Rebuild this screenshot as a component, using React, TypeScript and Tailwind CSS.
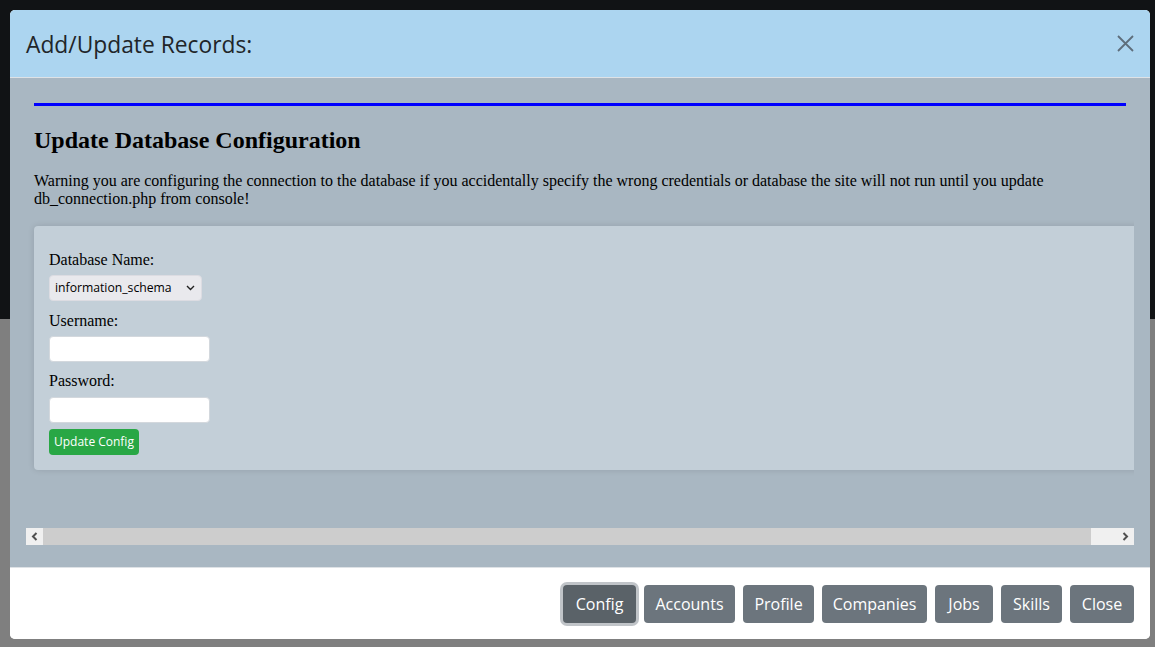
import React from "react";

const sans = { fontFamily: '"Open Sans", "Noto Sans", sans-serif' };

function Chevron({ dir }: { dir: "left" | "right" }) {
  return (
    <svg width="7" height="9" viewBox="0 0 7 9" className="block">
      {dir === "left" ? (
        <polyline points="5.5,1 2,4.5 5.5,8" fill="none" stroke="#505050" strokeWidth="2" />
      ) : (
        <polyline points="1.5,1 5,4.5 1.5,8" fill="none" stroke="#505050" strokeWidth="2" />
      )}
    </svg>
  );
}

export default function App() {
  const buttons: { label: string; w: string; active?: boolean }[] = [
    { label: "Config", w: "w-[73px]", active: true },
    { label: "Accounts", w: "w-[91px]" },
    { label: "Profile", w: "w-[71px]" },
    { label: "Companies", w: "w-[105px]" },
    { label: "Jobs", w: "w-[58px]" },
    { label: "Skills", w: "w-[61px]" },
    { label: "Close", w: "w-[64px]" },
  ];

  return (
    <div className="relative w-[1155px] h-[647px] overflow-hidden">
      <div className="h-[319px] bg-[#111315]" />
      <div className="h-[328px] bg-[#7f7f7f]" />

      <div className="absolute left-[10px] top-[10px] w-[1140px] h-[629px] flex flex-col rounded-[5px] overflow-hidden bg-white">
        {/* header */}
        <div className="h-[68px] shrink-0 bg-[#acd5f0] border-b border-[#dee2e6] flex items-center justify-between pl-4 pr-4">
          <div className="pt-[3px] text-[22.8px] leading-[36px] text-[#212529]" style={sans}>
            Add/Update Records:
          </div>
          <svg width="17" height="17" viewBox="0 0 17 17" className="block">
            <path d="M1 1 L16 16 M16 1 L1 16" stroke="#5e6e7b" strokeWidth="1.8" fill="none" />
          </svg>
        </div>

        {/* body */}
        <div className="h-[489px] shrink-0 bg-[#a9b7c2] pt-4 px-4 pb-[22px] flex flex-col">
          <div className="h-[434px] shrink-0 overflow-hidden px-2 pt-[9px]" style={{ fontFamily: '"Liberation Serif", "Times New Roman", serif' }}>
            <div className="h-[3px] bg-[#0000ff]" />
            <h3 className="mt-[20px] text-[24px] leading-[28px] font-bold text-black">
              Update Database Configuration
            </h3>
            <p className="mt-[18px] text-[16px] leading-[18.4px] text-black">
              Warning you are configuring the connection to the database if you accidentally specify the wrong credentials or database the site will not run until you update db_connection.php from console!
            </p>
            <div className="mt-[17px] w-[1110px] rounded-[4px] bg-[#c3cfd8] shadow-[0_0_6px_rgba(0,0,0,0.12)] pt-[22px] pl-[15px] pb-[15px] flex flex-col items-start">
              <div className="text-[16px] leading-[24px] text-black">Database Name:</div>
              <div
                className="mt-[3px] h-[26px] w-[153px] rounded-[4px] bg-[#e9e9ed] border border-[#dcdce2] flex items-center justify-between pl-[5px] pr-[6px] text-[12.2px] text-black"
                style={sans}
              >
                <span>information_schema</span>
                <svg width="9" height="6" viewBox="0 0 9 6" className="block">
                  <polyline points="1,1 4.5,4.5 8,1" fill="none" stroke="#222" strokeWidth="1.4" />
                </svg>
              </div>
              <div className="mt-[8px] text-[16px] leading-[24px] text-black">Username:</div>
              <input
                type="text"
                className="mt-[3px] h-[26px] w-[161px] rounded-[4px] bg-white border border-[#d3d8dd] outline-none"
              />
              <div className="mt-[7px] text-[16px] leading-[24px] text-black">Password:</div>
              <input
                type="password"
                className="mt-[4px] h-[26px] w-[161px] rounded-[4px] bg-white border border-[#d3d8dd] outline-none"
              />
              <button
                className="mt-[6px] h-[26px] w-[90px] rounded-[4px] bg-[#28a745] text-white text-[12px] leading-[18px] px-[5px] text-left"
                style={sans}
              >
                Update Config
              </button>
            </div>
          </div>
          {/* horizontal scrollbar */}
          <div className="h-[17px] shrink-0 flex">
            <div className="w-[17px] bg-[#f0f0f0] flex items-center justify-center">
              <Chevron dir="left" />
            </div>
            <div className="flex-1 bg-[#cdcdcd]" />
            <div className="w-[26px] bg-[#f0f0f0]" />
            <div className="w-[17px] bg-[#f0f0f0] flex items-center justify-center">
              <Chevron dir="right" />
            </div>
          </div>
        </div>

        {/* footer */}
        <div className="h-[72px] shrink-0 border-t border-[#dee2e6] bg-white flex items-center justify-end pr-4 gap-2 pt-[1px]">
          {buttons.map((b) => (
            <button
              key={b.label}
              className={`${b.w} h-[38px] rounded-[4px] text-white text-[16px] leading-[24px] text-center ${
                b.active ? "bg-[#5a6268] shadow-[0_0_0_3px_rgba(130,138,145,0.5)]" : "bg-[#6c757d]"
              }`}
              style={sans}
            >
              {b.label}
            </button>
          ))}
        </div>
      </div>
    </div>
  );
}
